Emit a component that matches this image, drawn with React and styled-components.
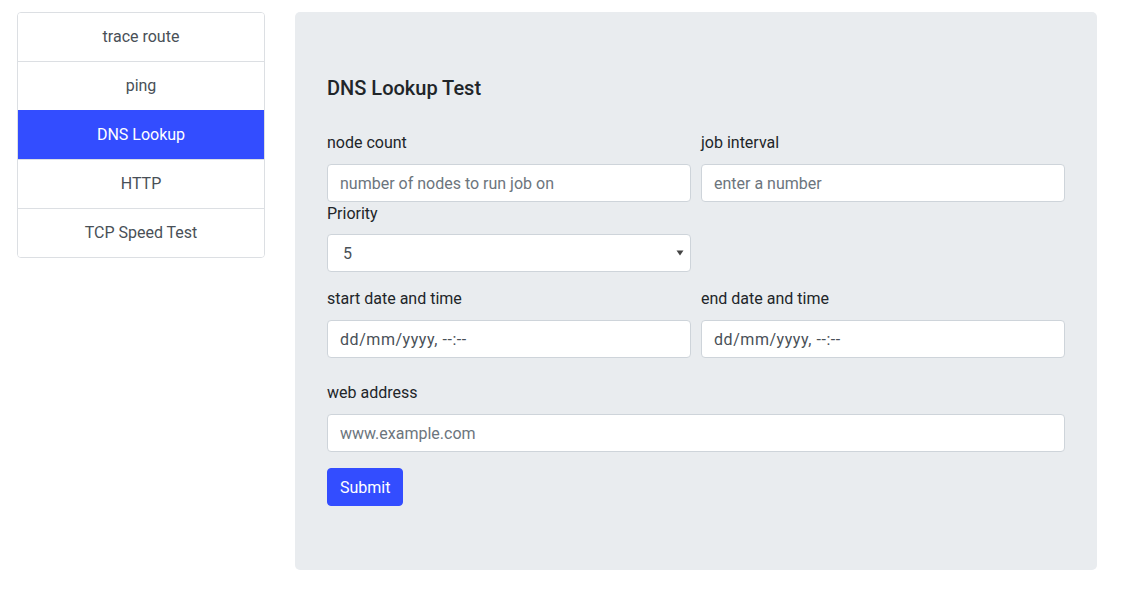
import React from "react";
import styled, { createGlobalStyle } from "styled-components";

const Global = createGlobalStyle`
  * { box-sizing: border-box; }
  body {
    margin: 0;
    font-family: Roboto, "Liberation Sans", sans-serif;
    font-size: 16px;
    line-height: 1.5;
    color: #212529;
    background: #fff;
  }
`;

const Page = styled.div`
  display: flex;
  align-items: flex-start;
  gap: 30px;
  padding: 12px 0 0 17px;
`;

const ListGroup = styled.nav`
  width: 248px;
  display: flex;
  flex-direction: column;
  border: 1px solid #dcdfe3;
  border-radius: 4px;
  overflow: hidden;
`;

const ListItem = styled.div`
  padding: 12px 20px;
  text-align: center;
  color: ${(p) => (p.$active ? "#fff" : "#495057")};
  background: ${(p) => (p.$active ? "#334dff" : "#fff")};
  border-top: 1px solid ${(p) => (p.$active ? "#334dff" : "#dcdfe3")};
  line-height: 24px;
  &:first-child { border-top: none; }
`;

const Panel = styled.main`
  width: 802px;
  background: #e9ecef;
  border-radius: 5px;
  padding: 64px 32px;
`;

const Title = styled.h5`
  margin: 0 0 31px;
  font-size: 20px;
  font-weight: 500;
  line-height: 24px;
  color: #212529;
`;

const Row = styled.div`
  display: grid;
  grid-template-columns: 1fr 1fr;
  column-gap: 10px;
  margin-bottom: ${(p) => p.$mb || 0}px;
`;

const Field = styled.div`
  display: flex;
  flex-direction: column;
  margin-bottom: ${(p) => p.$mb || 0}px;
`;

const Label = styled.label`
  line-height: 24px;
  margin-bottom: ${(p) => (p.$tight ? 8 : 9)}px;
  color: #212529;
`;

const Input = styled.input`
  height: 38px;
  width: 100%;
  padding: 6px 12px;
  font-family: inherit;
  font-size: 16px;
  letter-spacing: ${(p) => (p.$date ? "0.55px" : "normal")};
  color: #495057;
  background: #fff;
  border: 1px solid #ced4da;
  border-radius: 4px;
  outline: none;
  &::placeholder { color: #6c757d; opacity: 1; }
`;

const Select = styled.select`
  height: 38px;
  width: 100%;
  padding: 6px 28px 6px 15px;
  font-family: inherit;
  font-size: 16px;
  color: #495057;
  border: 1px solid #ced4da;
  border-radius: 4px;
  appearance: none;
  -webkit-appearance: none;
  background: #fff url("data:image/svg+xml,%3Csvg xmlns='http://www.w3.org/2000/svg' width='8' height='6'%3E%3Cpath d='M0.5 0.5h7L4 5.5z' fill='%23444'/%3E%3C/svg%3E") no-repeat right 6px center;
  outline: none;
`;

const Button = styled.button`
  height: 38px;
  padding: 0 12px;
  font-family: inherit;
  font-size: 16px;
  color: #fff;
  background: #334dff;
  border: 1px solid #334dff;
  border-radius: 4px;
  cursor: pointer;
`;

const items = ["trace route", "ping", "DNS Lookup", "HTTP", "TCP Speed Test"];

export default function App() {
  return (
    <>
      <Global />
      <Page>
        <ListGroup>
          {items.map((t) => (
            <ListItem key={t} $active={t === "DNS Lookup"}>
              {t}
            </ListItem>
          ))}
        </ListGroup>
        <Panel>
          <Title>DNS Lookup Test</Title>
          <Row>
            <Field>
              <Label>node count</Label>
              <Input placeholder="number of nodes to run job on" />
            </Field>
            <Field>
              <Label>job interval</Label>
              <Input placeholder="enter a number" />
            </Field>
          </Row>
          <Row $mb={15}>
            <Field>
              <Label $tight>Priority</Label>
              <Select defaultValue="5">
                {[1, 2, 3, 4, 5].map((n) => (
                  <option key={n} value={n}>
                    {n}
                  </option>
                ))}
              </Select>
            </Field>
          </Row>
          <Row $mb={23}>
            <Field>
              <Label>start date and time</Label>
              <Input $date readOnly defaultValue="dd/mm/yyyy, --:--" />
            </Field>
            <Field>
              <Label>end date and time</Label>
              <Input $date readOnly defaultValue="dd/mm/yyyy, --:--" />
            </Field>
          </Row>
          <Field $mb={16}>
            <Label>web address</Label>
            <Input placeholder="www.example.com" />
          </Field>
          <div>
            <Button>Submit</Button>
          </div>
        </Panel>
      </Page>
    </>
  );
}
